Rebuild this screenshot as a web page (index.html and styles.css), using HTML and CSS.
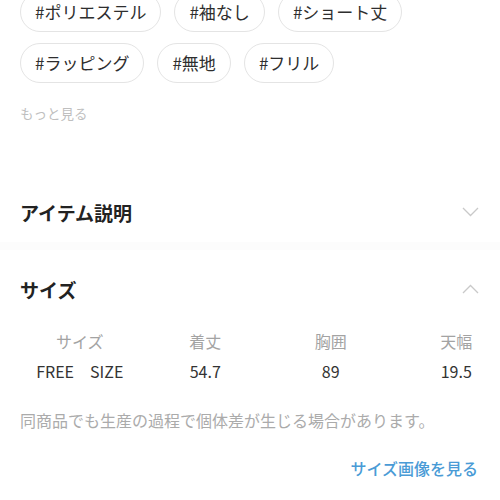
FILE: index.html
```html
<!DOCTYPE html>
<html lang="ja">
<head>
<meta charset="utf-8">
<link rel="stylesheet" href="styles.css">
</head>
<body>
<div class="page">
  <div class="tags">
    <span class="tag">#ポリエステル</span>
    <span class="tag">#袖なし</span>
    <span class="tag">#ショート丈</span>
    <span class="tag">#ラッピング</span>
    <span class="tag">#無地</span>
    <span class="tag">#フリル</span>
  </div>
  <div class="more">もっと見る</div>

  <div class="acc-head first">
    <span class="acc-title">アイテム説明</span>
    <svg class="chev" width="17" height="10" viewBox="0 0 17 10"><polyline points="1,1 8.5,8.5 16,1" fill="none" stroke="#c9c9c9" stroke-width="1.3"/></svg>
  </div>
  <div class="divider"></div>
  <div class="acc-head second">
    <span class="acc-title">サイズ</span>
    <svg class="chev" width="17" height="10" viewBox="0 0 17 10"><polyline points="1,9 8.5,1.5 16,9" fill="none" stroke="#c9c9c9" stroke-width="1.3"/></svg>
  </div>

  <div class="table-wrap">
    <div class="size-table">
      <div class="th">サイズ</div>
      <div class="th">着丈</div>
      <div class="th">胸囲</div>
      <div class="th">天幅</div>
      <div class="td">FREE　SIZE</div>
      <div class="td">54.7</div>
      <div class="td">89</div>
      <div class="td">19.5</div>
    </div>
  </div>

  <p class="note">同商品でも生産の過程で個体差が生じる場合があります。</p>
  <div class="link-row"><span class="link">サイズ画像を見る</span></div>
</div>
</body>
</html>
```

FILE: styles.css
```css
html, body {
  margin: 0;
  padding: 0;
  background: #ffffff;
  overflow: hidden;
}
body {
  font-family: "Noto Sans CJK JP", "Noto Sans", sans-serif;
  color: #333333;
}
.page {
  width: 500px;
}
.tags {
  display: flex;
  flex-wrap: wrap;
  gap: 11px 13px;
  padding: 0 20px;
  margin-top: -8px;
}
.tag {
  box-sizing: border-box;
  height: 40px;
  line-height: 38px;
  padding: 0 14px;
  border: 1px solid #e4e4e4;
  border-radius: 20px;
  font-size: 17px;
  color: #2e2e2e;
  white-space: nowrap;
}
.more {
  margin-top: 20px;
  padding-left: 20px;
  font-size: 13.5px;
  line-height: 20px;
  color: #bfbfbf;
}
.acc-head {
  display: flex;
  justify-content: space-between;
  align-items: center;
  height: 60px;
  padding: 0 21px 0 20px;
}
.acc-head.first {
  margin-top: 59px;
}
.acc-head.second {
  margin-top: 9px;
}
.acc-title {
  font-size: 19px;
  font-weight: bold;
  color: #222222;
}
.divider {
  height: 8px;
  background: #fcfcfc;
}
.table-wrap {
  overflow: hidden;
  margin-top: 7px;
}
.size-table {
  display: grid;
  grid-template-columns: repeat(4, 125.5px);
  margin-left: 17px;
  width: 502px;
}
.th, .td {
  text-align: center;
  font-size: 16px;
  line-height: 30px;
}
.th {
  color: #a3a3a3;
}
.td {
  color: #333333;
}
.note {
  margin: 22px 0 0;
  padding-left: 20px;
  font-size: 16px;
  line-height: 24px;
  color: #ababab;
}
.link-row {
  margin-top: 24px;
  padding-right: 22px;
  text-align: right;
  line-height: 24px;
}
.link {
  font-size: 16px;
  font-weight: 500;
  color: #4a9bd6;
}
```
